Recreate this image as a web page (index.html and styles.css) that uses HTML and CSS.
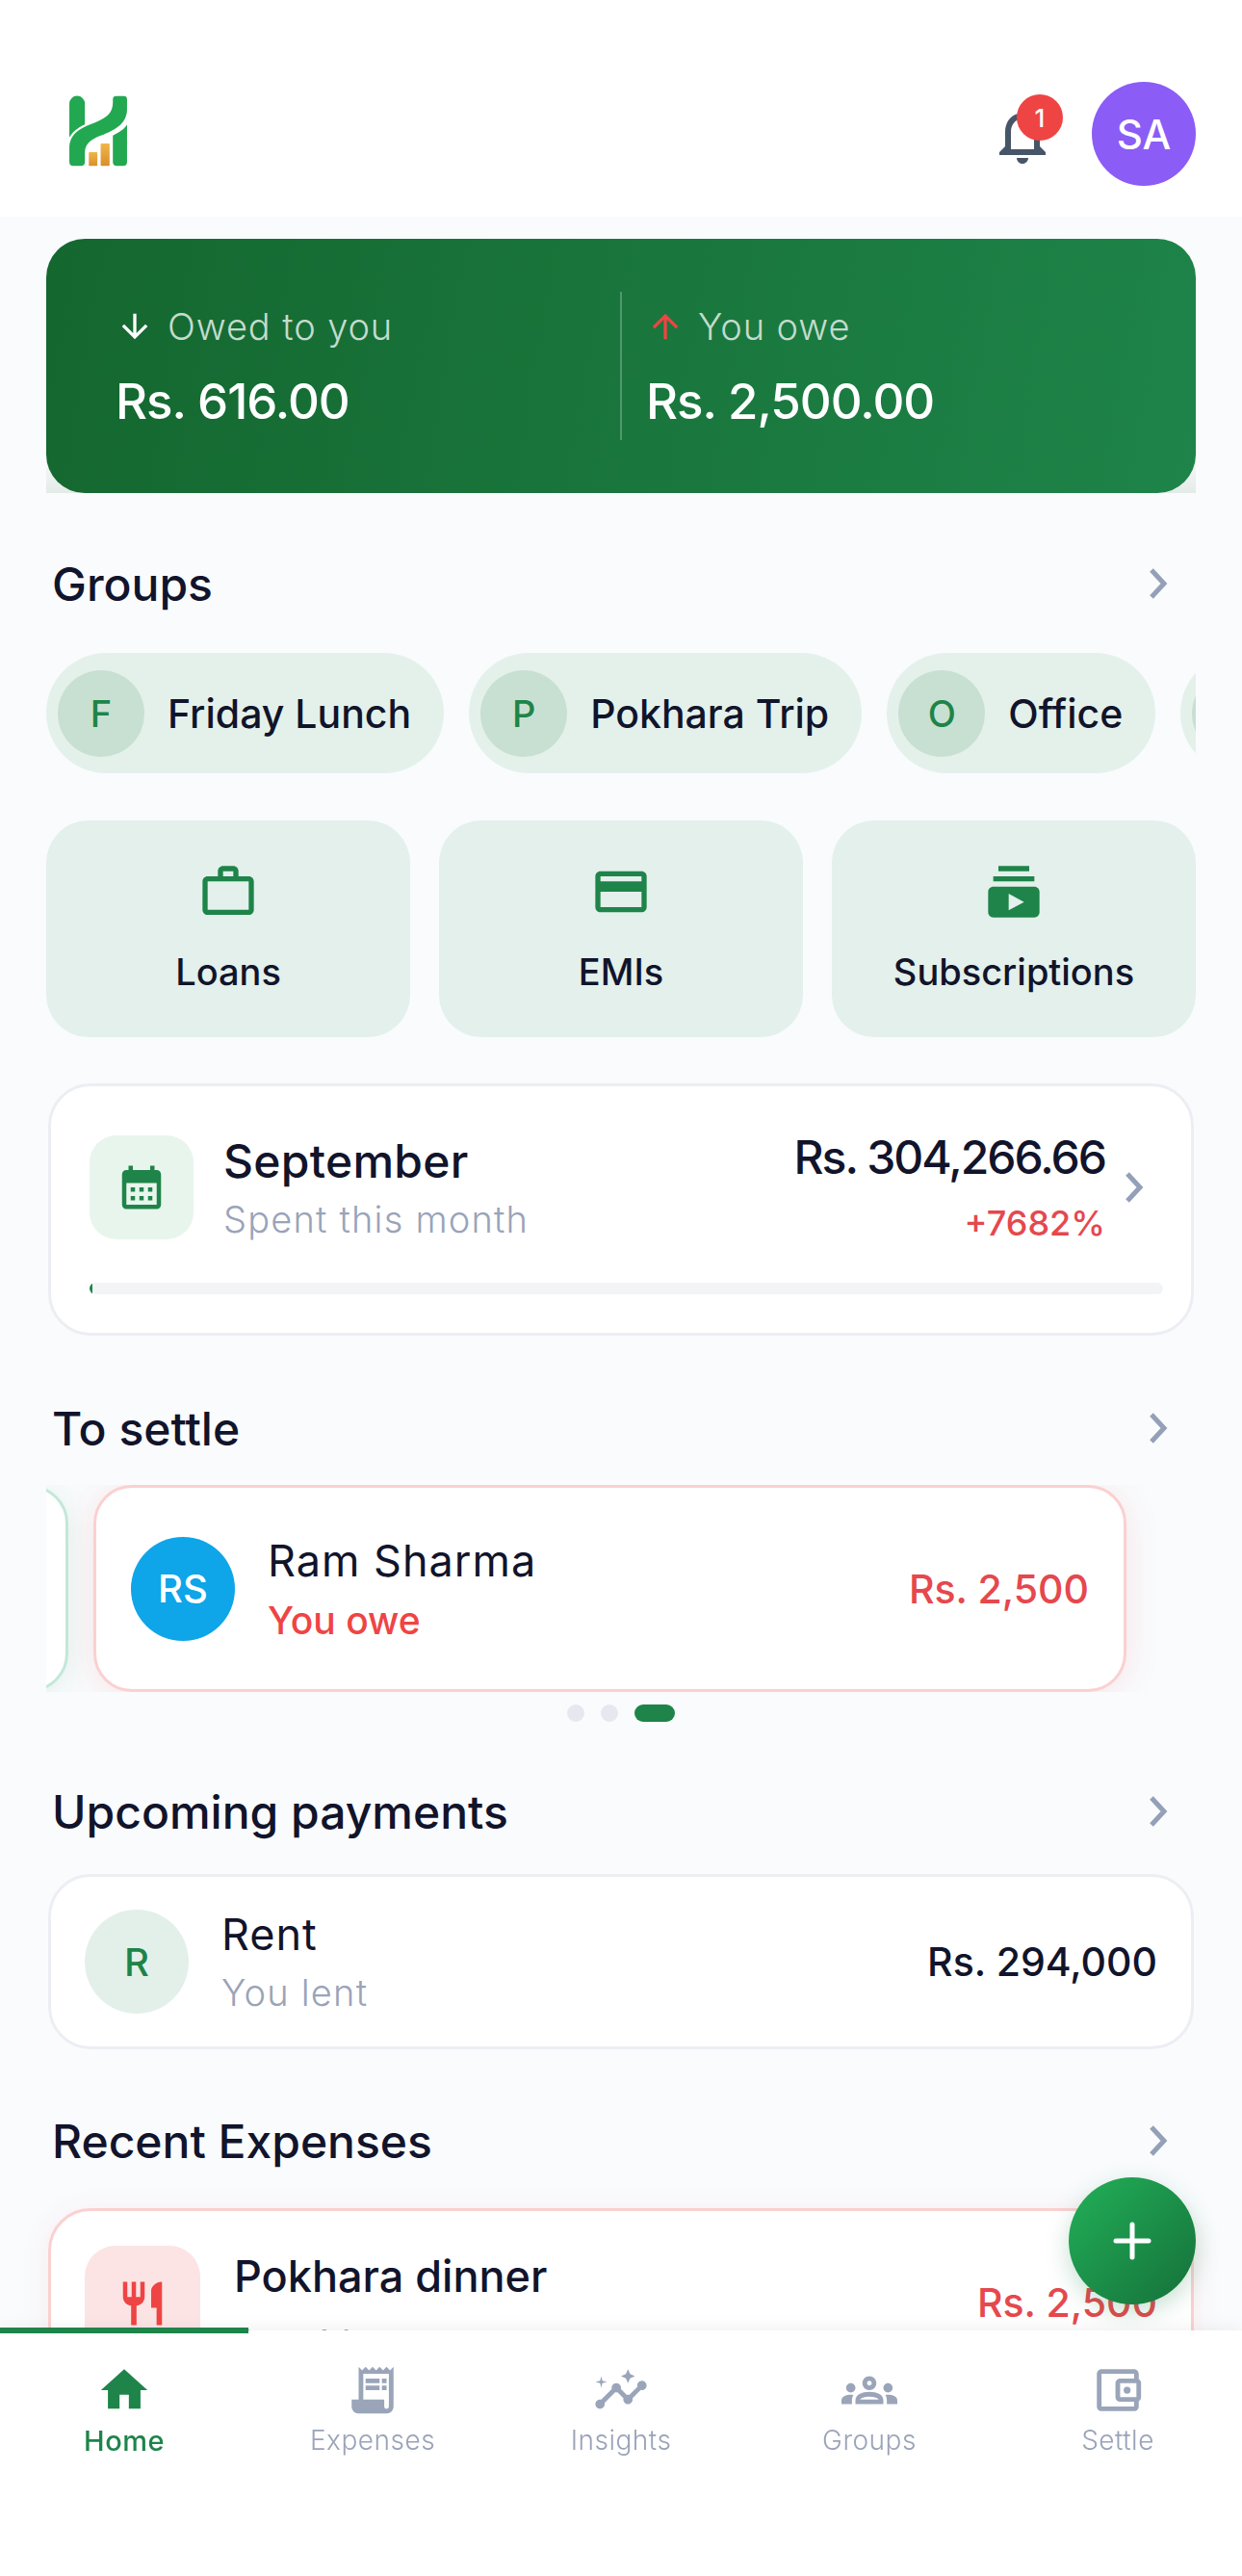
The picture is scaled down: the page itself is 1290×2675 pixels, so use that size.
FILE: index.html
```html
<!DOCTYPE html>
<html lang="en">
<head>
    <meta charset="UTF-8">
    <meta name="viewport" content="width=device-width, initial-scale=1.0">
    <title>Home</title>
    <link rel="stylesheet" href="styles.css">
</head>
<body>
    <header class="top-bar">
        <svg class="logo" viewBox="95 85 185 222">
            <defs>
                <linearGradient id="gold" x1="0" y1="0" x2="0" y2="1">
                    <stop offset="0" stop-color="#f0b64a"/>
                    <stop offset="1" stop-color="#d98e2b"/>
                </linearGradient>
            </defs>
            <path fill="#22a850" d="M100 113a23 23 0 0 1 47 0V176C125 186 108 200 100 216Z"/>
            <path fill="#22a850" d="M100 290V250C100 200 140 185 180 170C215 155 232 140 232 110V100a10 10 0 0 1 10-10H265a10 10 0 0 1 10 10V130C275 175 235 195 195 210C165 222 147 235 147 262V290a12 12 0 0 1-12 12H112a12 12 0 0 1-12-12Z"/>
            <path fill="#22a850" d="M275 176V290a12 12 0 0 1-12 12H244a12 12 0 0 1-12-12V210C250 200 268 190 275 176Z"/>
            <rect fill="url(#gold)" x="159" y="260" width="26" height="42" rx="2"/>
            <rect fill="url(#gold)" x="195" y="234" width="27" height="68" rx="2"/>
        </svg>
        <div class="top-actions">
            <div class="bell">
                <svg viewBox="0 0 24 24"><path d="M12 22c1.1 0 2-.9 2-2h-4c0 1.1.9 2 2 2zm6-6v-5c0-3.07-1.63-5.64-4.5-6.32V4c0-.83-.67-1.5-1.5-1.5s-1.5.67-1.5 1.5v.68C7.64 5.36 6 7.92 6 11v5l-2 2v1h16v-1l-2-2zm-2 1H8v-6c0-2.48 1.51-4.5 4-4.5s4 2.02 4 4.5v6z"/></svg>
                <span class="badge">1</span>
            </div>
            <div class="avatar-me">SA</div>
        </div>
    </header>

    <main class="content">
        <div class="hero-clip">
            <section class="hero">
                <div class="hero-col">
                    <div class="hero-label">
                        <svg class="arrow-in" viewBox="0 0 24 24"><path d="M20 12l-1.41-1.41L13 16.17V4h-2v12.17l-5.58-5.59L4 12l8 8 8-8z"/></svg>
                        <span>Owed to you</span>
                    </div>
                    <div class="hero-amount">Rs. 616.00</div>
                </div>
                <div class="hero-divider"></div>
                <div class="hero-col hero-col-right">
                    <div class="hero-label">
                        <svg class="arrow-out" viewBox="0 0 24 24"><path d="M4 12l1.41 1.41L11 7.83V20h2V7.83l5.58 5.59L20 12l-8-8-8 8z"/></svg>
                        <span>You owe</span>
                    </div>
                    <div class="hero-amount">Rs. 2,500.00</div>
                </div>
            </section>
        </div>

        <div class="section-head head-groups">
            <h2>Groups</h2>
            <svg class="chevron" viewBox="0 0 24 36"><polyline points="5,4 18,18 5,32"/></svg>
        </div>
        <div class="chips">
            <div class="chip"><span class="chip-letter">F</span><span>Friday Lunch</span></div>
            <div class="chip"><span class="chip-letter">P</span><span>Pokhara Trip</span></div>
            <div class="chip"><span class="chip-letter">O</span><span>Office</span></div>
            <div class="chip"><span class="chip-letter"></span></div>
        </div>

        <div class="tiles">
            <div class="tile">
                <svg viewBox="0 0 24 24"><path d="M14 6V4h-4v2h4zM4 8v11h16V8H4zm16-2c1.11 0 2 .89 2 2v11c0 1.11-.89 2-2 2H4c-1.11 0-2-.89-2-2l.01-11c0-1.11.88-2 1.99-2h4V4c0-1.11.89-2 2-2h4c1.11 0 2 .89 2 2v2h4z"/></svg>
                <span>Loans</span>
            </div>
            <div class="tile">
                <svg viewBox="0 0 24 24"><path d="M20 4H4c-1.11 0-1.99.89-1.99 2L2 18c0 1.11.89 2 2 2h16c1.11 0 2-.89 2-2V6c0-1.11-.89-2-2-2zm0 14H4v-6h16v6zm0-10H4V6h16v2z"/></svg>
                <span>EMIs</span>
            </div>
            <div class="tile">
                <svg viewBox="0 0 24 24"><path d="M20 8H4V6h16v2zm-2-6H6v2h12V2zm4 10v8c0 1.1-.9 2-2 2H4c-1.1 0-2-.9-2-2v-8c0-1.1.9-2 2-2h16c1.1 0 2 .9 2 2zm-6 4l-6-3.27v6.53L16 16z"/></svg>
                <span>Subscriptions</span>
            </div>
        </div>

        <section class="month-card">
            <div class="month-row">
                <div class="month-icon">
                    <svg viewBox="0 0 24 24"><path d="M19 4h-1V2h-2v2H8V2H6v2H5c-1.1 0-2 .9-2 2v14c0 1.1.9 2 2 2h14c1.1 0 2-.9 2-2V6c0-1.1-.9-2-2-2zm0 16H5V10h14v10zM9 14H7v-2h2v2zm4 0h-2v-2h2v2zm4 0h-2v-2h2v2zm-8 4H7v-2h2v2zm4 0h-2v-2h2v2zm4 0h-2v-2h2v2z"/></svg>
                </div>
                <div class="month-text">
                    <div class="month-name">September</div>
                    <div class="muted">Spent this month</div>
                </div>
                <div class="month-figures">
                    <div class="month-total">Rs. 304,266.66</div>
                    <div class="month-change">+7682%</div>
                </div>
                <svg class="chevron chevron-month" viewBox="0 0 24 36"><polyline points="5,4 18,18 5,32"/></svg>
            </div>
            <div class="progress"><div class="progress-fill"></div></div>
        </section>

        <div class="section-head head-settle">
            <h2>To settle</h2>
            <svg class="chevron" viewBox="0 0 24 36"><polyline points="5,4 18,18 5,32"/></svg>
        </div>
        <div class="carousel">
            <div class="carousel-track">
                <div class="settle-card settle-lent"></div>
                <div class="settle-card settle-owe">
                    <div class="person-avatar">RS</div>
                    <div class="person-text">
                        <div class="person-name">Ram Sharma</div>
                        <div class="person-note">You owe</div>
                    </div>
                    <div class="settle-amount">Rs. 2,500</div>
                </div>
            </div>
        </div>
        <div class="dots">
            <span class="dot"></span>
            <span class="dot"></span>
            <span class="dot dot-active"></span>
        </div>

        <div class="section-head head-upcoming">
            <h2>Upcoming payments</h2>
            <svg class="chevron" viewBox="0 0 24 36"><polyline points="5,4 18,18 5,32"/></svg>
        </div>
        <section class="payment-card">
            <div class="payment-letter">R</div>
            <div class="person-text">
                <div class="person-name">Rent</div>
                <div class="muted">You lent</div>
            </div>
            <div class="payment-amount">Rs. 294,000</div>
        </section>

        <div class="section-head head-recent">
            <h2>Recent Expenses</h2>
            <svg class="chevron" viewBox="0 0 24 36"><polyline points="5,4 18,18 5,32"/></svg>
        </div>
        <section class="expense-card">
            <div class="expense-icon">
                <svg viewBox="0 0 24 24"><path d="M11 9H9V2H7v7H5V2H3v7c0 2.12 1.66 3.84 3.75 3.97V22h2.5v-9.03C11.34 12.84 13 11.12 13 9V2h-2v7zm5-3v8h2.5v8H21V2c-2.76 0-5 2.24-5 4z"/></svg>
            </div>
            <div class="expense-text">
                <div class="expense-name">Pokhara dinner</div>
                <div class="muted">Sep 14</div>
            </div>
            <div class="expense-amount">Rs. 2,500</div>
        </section>
    </main>

    <button class="fab">
        <svg viewBox="0 0 40 40"><path d="M20 3v34M3 20h34"/></svg>
    </button>

    <nav class="bottom-nav">
        <div class="nav-marker"></div>
        <div class="nav-item nav-active">
            <svg viewBox="0 0 24 24"><path d="M10 20v-6h4v6h5v-8h3L12 3 2 12h3v8z"/></svg>
            <span>Home</span>
        </div>
        <div class="nav-item">
            <svg viewBox="0 0 24 24"><path d="M19.5 3.5L18 2l-1.5 1.5L15 2l-1.5 1.5L12 2l-1.5 1.5L9 2 7.5 3.5 6 2v14H3v3c0 1.66 1.34 3 3 3h12c1.66 0 3-1.34 3-3V2l-1.5 1.5zM19 19c0 .55-.45 1-1 1s-1-.45-1-1v-3H8V5h11v14z"/><path d="M9 7h6v2H9zM16 7h2v2h-2zM9 10h6v2H9zM16 10h2v2h-2z"/></svg>
            <span>Expenses</span>
        </div>
        <div class="nav-item">
            <svg viewBox="0 0 24 24"><path d="M21 8c-1.45 0-2.26 1.44-1.93 2.51l-3.55 3.56c-.3-.09-.74-.09-1.04 0l-2.55-2.55C12.27 10.45 11.46 9 10 9c-1.45 0-2.27 1.44-1.93 2.52l-4.56 4.55C2.44 15.74 1 16.55 1 18c0 1.1.9 2 2 2 1.45 0 2.26-1.44 1.93-2.51l4.55-4.56c.3.09.74.09 1.04 0l2.55 2.55C12.73 16.55 13.54 18 15 18c1.45 0 2.27-1.44 1.93-2.52l3.56-3.55c1.07.33 2.51-.48 2.51-1.93 0-1.1-.9-2-2-2z"/><path d="M15 9l.94-2.07L18 6l-2.06-.93L15 3l-.92 2.07L12 6l2.08.93zM3.5 11L4 9l2-.5L4 8l-.5-2L3 8l-2 .5L3 9z"/></svg>
            <span>Insights</span>
        </div>
        <div class="nav-item">
            <svg viewBox="0 0 24 24"><path d="M4 13c1.1 0 2-.9 2-2s-.9-2-2-2-2 .9-2 2 .9 2 2 2zm1.13 1.1c-.37-.06-.74-.1-1.13-.1-.99 0-1.93.21-2.78.58C.48 14.9 0 15.62 0 16.43V18h4.5v-1.61c0-.83.23-1.61.63-2.29zM20 13c1.1 0 2-.9 2-2s-.9-2-2-2-2 .9-2 2 .9 2 2 2zm4 3.43c0-.81-.48-1.53-1.22-1.85-.85-.37-1.79-.58-2.78-.58-.39 0-.76.04-1.13.1.4.68.63 1.46.63 2.29V18H24v-1.57zm-7.76-2.78C15.07 13.13 13.63 12.75 12 12.75c-1.63 0-3.07.39-4.24.9C6.68 14.13 6 15.21 6 16.39V18h12v-1.61c0-1.18-.68-2.26-1.76-2.74zM8.07 16c.09-.23.13-.39.91-.69.97-.38 1.99-.56 3.02-.56s2.05.18 3.02.56c.77.3.81.46.91.69H8.07zM12 8c.55 0 1 .45 1 1s-.45 1-1 1-1-.45-1-1 .45-1 1-1m0-2c-1.66 0-3 1.34-3 3s1.34 3 3 3 3-1.34 3-3-1.34-3-3-3z"/></svg>
            <span>Groups</span>
        </div>
        <div class="nav-item">
            <svg viewBox="0 0 24 24"><path d="M21 7.28V5c0-1.1-.9-2-2-2H5c-1.11 0-2 .9-2 2v14c0 1.1.89 2 2 2h14c1.1 0 2-.9 2-2v-2.28c.59-.35 1-.98 1-1.72V9c0-.74-.41-1.38-1-1.72zM20 9v6h-7V9h7zM5 19V5h14v2h-6c-1.1 0-2 .9-2 2v6c0 1.1.9 2 2 2h6v2H5z"/><circle cx="16" cy="12" r="1.5"/></svg>
            <span>Settle</span>
        </div>
    </nav>
</body>
</html>
```

FILE: styles.css
```css
* {
    margin: 0;
    padding: 0;
    box-sizing: border-box;
}
html, body {
    height: 2675px;
    overflow: hidden;
}
body {
    background-color: #f9fbfd;
    color: #11142b;
    font-family: Inter, "Noto Sans", sans-serif;
}

/* top bar */
.top-bar {
    height: 225px;
    background: #fff;
    display: flex;
    align-items: flex-start;
    justify-content: space-between;
    padding: 85px 48px 0 70px;
}
.logo {
    width: 64px;
    height: 76px;
    margin-top: 13px;
}
.top-actions {
    display: flex;
    gap: 36px;
}
.bell {
    position: relative;
    width: 72px;
    height: 72px;
    margin-top: 19px;
}
.bell svg {
    width: 72px;
    height: 72px;
    fill: #475569;
}
.badge {
    position: absolute;
    top: -6px;
    left: 30px;
    width: 48px;
    height: 48px;
    border-radius: 50%;
    background: #ef4444;
    color: #fff;
    font-size: 26px;
    font-weight: 500;
    display: flex;
    align-items: center;
    justify-content: center;
}
.avatar-me {
    width: 108px;
    height: 108px;
    border-radius: 50%;
    background: #8b5cf6;
    color: #fff;
    font-size: 42px;
    font-weight: 500;
    display: flex;
    align-items: center;
    justify-content: center;
}

/* page body */
.content {
    padding: 23px 48px 0;
}
.hero-clip {
    overflow: hidden;
    background: linear-gradient(#f9fbfd 85%, #e3ebe7 100%);
}
.hero {
    height: 264px;
    padding: 55px 72px;
    border-radius: 40px;
    background: linear-gradient(100deg, #14672f 0%, #1e8449 100%);
    display: grid;
    grid-template-columns: 524px 2px 1fr;
    color: #fff;
}
.hero-col {
    display: flex;
    flex-direction: column;
    padding-top: 9px;
}
.hero-col-right {
    padding-left: 25px;
}
.hero-divider {
    background: rgba(255, 255, 255, 0.25);
}
.hero-label {
    display: flex;
    align-items: center;
    gap: 14px;
    height: 54px;
    font-size: 38px;
    font-weight: 300;
    letter-spacing: 0.9px;
    color: #c3dccd;
}
.hero-label svg {
    width: 40px;
    height: 40px;
}
.arrow-in {
    fill: #fff;
}
.arrow-out {
    fill: #ef4444;
}
.hero-amount {
    margin-top: 21px;
    font-size: 51px;
    line-height: 60px;
    font-weight: 500;
    letter-spacing: -1px;
}

.section-head {
    height: 70px;
    padding: 0 27px 0 6px;
    display: flex;
    align-items: center;
    justify-content: space-between;
}
.section-head h2 {
    font-size: 48px;
    font-weight: 500;
}
.chevron {
    width: 24px;
    height: 36px;
    fill: none;
    stroke: #94a0b8;
    stroke-width: 5;
}
.head-groups {
    margin-top: 59px;
}
.head-settle {
    margin-top: 61px;
}
.head-upcoming {
    margin-top: 58px;
}
.head-recent {
    margin-top: 60px;
}

/* group chips */
.chips {
    margin-top: 37px;
    display: flex;
    gap: 26px;
    overflow: hidden;
}
.chip {
    height: 125px;
    flex-shrink: 0;
    padding: 0 34px 0 12px;
    border-radius: 63px;
    background: #e4f1eb;
    display: flex;
    align-items: center;
    gap: 24px;
    font-size: 41px;
    font-weight: 500;
}
.chip-letter {
    width: 90px;
    height: 90px;
    border-radius: 50%;
    background: #c8e0d2;
    color: #1e8449;
    font-size: 38px;
    display: flex;
    align-items: center;
    justify-content: center;
}

/* shortcuts */
.tiles {
    margin-top: 49px;
    display: grid;
    grid-template-columns: repeat(3, 1fr);
    gap: 30px;
}
.tile {
    height: 225px;
    border-radius: 44px;
    background: #e3f0eb;
    display: flex;
    flex-direction: column;
    align-items: center;
    padding-top: 42px;
    font-size: 38px;
    font-weight: 500;
}
.tile svg {
    width: 64px;
    height: 64px;
    fill: #1e8449;
    margin-bottom: 28px;
}

/* month summary */
.month-card {
    margin: 48px 2px 0;
    height: 262px;
    background: #fff;
    border: 3px solid #eceef3;
    border-radius: 44px;
    padding: 51px 29px 0 40px;
}
.month-row {
    display: flex;
    align-items: center;
    height: 108px;
}
.month-icon {
    width: 108px;
    height: 108px;
    border-radius: 28px;
    background: #e8f5ec;
    display: flex;
    align-items: center;
    justify-content: center;
}
.month-icon svg {
    width: 54px;
    height: 54px;
    fill: #1e8449;
}
.month-text {
    margin-left: 31px;
    flex: 1;
}
.month-name {
    font-size: 48px;
    line-height: 56px;
    font-weight: 500;
    letter-spacing: 0.3px;
}
.muted {
    font-size: 38px;
    font-weight: 300;
    line-height: 46px;
    letter-spacing: 1.2px;
    color: #9aa3b8;
}
.month-text .muted {
    margin-top: 9px;
}
.month-figures {
    text-align: right;
}
.month-total {
    font-size: 48px;
    line-height: 56px;
    font-weight: 500;
    letter-spacing: -2px;
}
.month-change {
    margin-top: 18px;
    font-size: 36px;
    line-height: 44px;
    font-weight: 500;
    color: #e5484d;
}
.chevron-month {
    margin: 0 18px;
    flex-shrink: 0;
}
.progress {
    margin-top: 45px;
    height: 12px;
    border-radius: 6px;
    background: #f3f4f6;
    overflow: hidden;
}
.progress-fill {
    width: 3px;
    height: 100%;
    background: #1e8449;
}

/* settle carousel */
.carousel {
    margin-top: 24px;
    height: 215px;
    overflow: hidden;
}
.carousel-track {
    display: flex;
    gap: 26px;
    margin-left: -1050px;
}
.settle-card {
    flex-shrink: 0;
    width: 1073px;
    height: 215px;
    background: #fff;
    border-radius: 40px;
    display: flex;
    align-items: center;
    padding: 0 36px;
}
.settle-lent {
    border: 3px solid #c3e8d8;
    box-shadow: 0 4px 30px rgba(30, 132, 73, 0.1);
}
.settle-owe {
    border: 3px solid #fbd0d0;
    box-shadow: 0 4px 36px rgba(239, 68, 68, 0.12);
}
.person-avatar {
    width: 108px;
    height: 108px;
    border-radius: 50%;
    background: #0ea5e9;
    color: #fff;
    font-size: 40px;
    font-weight: 500;
    display: flex;
    align-items: center;
    justify-content: center;
}
.person-text {
    flex: 1;
    margin-left: 34px;
}
.person-name {
    font-size: 45px;
    line-height: 54px;
    font-weight: 400;
    letter-spacing: 1px;
}
.person-note {
    margin-top: 12px;
    font-size: 39px;
    line-height: 46px;
    font-weight: 500;
    color: #ef4444;
}
.settle-amount {
    font-size: 41px;
    font-weight: 500;
    color: #e5484d;
}
.dots {
    margin-top: 13px;
    display: flex;
    justify-content: center;
    gap: 17px;
}
.dot {
    width: 18px;
    height: 18px;
    border-radius: 50%;
    background: #e5e8ef;
}
.dot-active {
    width: 42px;
    border-radius: 9px;
    background: #1e8449;
}

/* upcoming */
.payment-card {
    margin: 30px 2px 0;
    height: 182px;
    background: #fff;
    border: 3px solid #eceef3;
    border-radius: 44px;
    padding: 0 35px;
    display: flex;
    align-items: center;
}
.payment-letter {
    width: 108px;
    height: 108px;
    border-radius: 50%;
    background: #e3f0e9;
    color: #1e8449;
    font-size: 40px;
    font-weight: 500;
    display: flex;
    align-items: center;
    justify-content: center;
}
.payment-amount {
    font-size: 41px;
    font-weight: 500;
}
.payment-card .muted {
    margin-top: 10px;
}

/* recent */
.expense-card {
    margin: 35px 2px 0;
    height: 220px;
    background: #fff;
    border: 3px solid #fbd0d0;
    border-radius: 44px;
    padding: 36px 35px 0;
    display: flex;
    align-items: flex-start;
    box-shadow: 0 4px 30px rgba(239, 68, 68, 0.08);
}
.expense-icon {
    width: 120px;
    height: 120px;
    border-radius: 32px;
    background: #fce4e4;
    display: flex;
    align-items: center;
    justify-content: center;
}
.expense-icon svg {
    width: 54px;
    height: 54px;
    fill: #ef4444;
}
.expense-text {
    flex: 1;
    margin-left: 35px;
}
.expense-name {
    font-size: 45px;
    line-height: 64px;
    font-weight: 500;
}
.expense-text .muted {
    margin-top: 14px;
}
.expense-amount {
    margin-top: 34px;
    font-size: 41px;
    font-weight: 500;
    color: #e5484d;
}

/* floating button */
.fab {
    position: fixed;
    right: 48px;
    bottom: 282px;
    width: 132px;
    height: 132px;
    border: none;
    border-radius: 50%;
    background: linear-gradient(135deg, #22b058 0%, #15703a 100%);
    box-shadow: 0 8px 24px rgba(30, 132, 73, 0.25);
    display: flex;
    align-items: center;
    justify-content: center;
    z-index: 5;
}
.fab svg {
    width: 40px;
    height: 40px;
    fill: none;
    stroke: #fff;
    stroke-width: 5;
    stroke-linecap: round;
}

/* bottom nav */
.bottom-nav {
    position: fixed;
    left: 0;
    right: 0;
    bottom: 0;
    height: 255px;
    background: #fff;
    box-shadow: 0 -4px 16px rgba(17, 20, 43, 0.05);
    display: flex;
    z-index: 4;
}
.nav-marker {
    position: absolute;
    top: -3px;
    left: 0;
    width: 258px;
    height: 6px;
    background: #1e8449;
}
.nav-item {
    flex: 1;
    display: flex;
    flex-direction: column;
    align-items: center;
    padding-top: 33px;
    font-size: 28px;
    font-weight: 300;
    letter-spacing: 0.5px;
    color: #9aa3b8;
}
.nav-item svg {
    width: 58px;
    height: 58px;
    fill: #9aa5ba;
    margin-bottom: 6px;
}
.nav-active {
    color: #1e8449;
    font-weight: 500;
    font-size: 29px;
}
.nav-active svg {
    fill: #1e8449;
}
```
